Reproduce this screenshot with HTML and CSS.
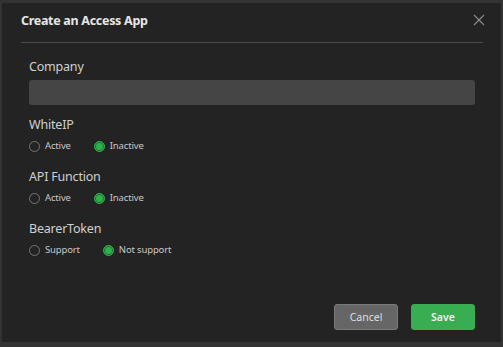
FILE: index.html
```html
<!DOCTYPE html>
<html>
<head>
<meta charset="utf-8">
<link rel="stylesheet" href="styles.css">
</head>
<body>
<div class="modal">
  <div class="header">
    <div class="title">Create an Access App</div>
    <button class="close" aria-label="close">
      <svg width="12" height="12" viewBox="0 0 12 12"><path d="M1 1L11 11M11 1L1 11" stroke="#8a8a8a" stroke-width="1.2" fill="none"/></svg>
    </button>
  </div>
  <div class="content">
    <div class="field">
      <div class="label">Company</div>
      <div class="input"></div>
    </div>
    <div class="field group">
      <div class="label">WhiteIP</div>
      <div class="radios">
        <span class="radio"><span class="dot"></span>Active</span>
        <span class="radio on"><span class="dot"></span>Inactive</span>
      </div>
    </div>
    <div class="field group">
      <div class="label">API Function</div>
      <div class="radios">
        <span class="radio"><span class="dot"></span>Active</span>
        <span class="radio on"><span class="dot"></span>Inactive</span>
      </div>
    </div>
    <div class="field group">
      <div class="label">BearerToken</div>
      <div class="radios">
        <span class="radio"><span class="dot"></span>Support</span>
        <span class="radio on"><span class="dot"></span>Not support</span>
      </div>
    </div>
  </div>
  <div class="footer">
    <button class="btn cancel">Cancel</button>
    <button class="btn save">Save</button>
  </div>
</div>
</body>
</html>
```
FILE: styles.css
```css
html, body {
  margin: 0;
  padding: 0;
  background: #333333;
  font-family: "Noto Sans", "Open Sans", sans-serif;
}
.modal {
  margin: 3px 2px 0 2px;
  height: 339px;
  background: #232323;
  box-sizing: border-box;
  display: flex;
  flex-direction: column;
}
.header {
  margin: 0 18px 0 19px;
  height: 39px;
  border-bottom: 1px solid #4a4a4a;
  display: flex;
  align-items: center;
  justify-content: space-between;
}
.title {
  color: #e6e6e6;
  font-weight: bold;
  font-size: 12.5px;
  letter-spacing: -0.3px;
  margin-top: -4px;
}
.close {
  background: none;
  border: none;
  padding: 0;
  margin-right: -2px;
  margin-top: -6px;
  display: flex;
  cursor: pointer;
}
.content {
  padding: 15px 26px 0 27px;
  display: flex;
  flex-direction: column;
  gap: 11px;
}
.group {
  padding-bottom: 4px;
}
.label {
  color: #d0d0d0;
  font-size: 12.5px;
  letter-spacing: -0.2px;
  line-height: 17px;
}
.input {
  margin-top: 5px;
  height: 25px;
  background: #454545;
  border-radius: 3px;
}
.radios {
  display: flex;
  gap: 23px;
  margin-top: 6px;
}
.radio {
  display: flex;
  align-items: center;
  color: #c8c8c8;
  font-size: 9.5px;
  letter-spacing: -0.15px;
  line-height: 14px;
}
.dot {
  width: 9px;
  height: 9px;
  border: 1px solid #777;
  border-radius: 50%;
  margin-right: 5px;
  box-sizing: content-box;
}
.radio.on .dot {
  background: #2fb04c;
  border-color: #2fb04c;
  box-shadow: inset 0 0 0 1px #1d6d30;
}
.footer {
  margin-top: auto;
  padding: 0 26px 12px 0;
  display: flex;
  justify-content: flex-end;
  gap: 13px;
}
.btn {
  width: 64px;
  height: 26px;
  border-radius: 3px;
  font-family: "Noto Sans", "Open Sans", sans-serif;
  font-size: 10.5px;
  color: #f0f0f0;
  cursor: pointer;
}
.cancel {
  background: #666666;
  border: 1px solid #7a7a7a;
  color: #dedede;
}
.save {
  background: #38ad52;
  border: 1px solid #38ad52;
  font-weight: 600;
}
```
